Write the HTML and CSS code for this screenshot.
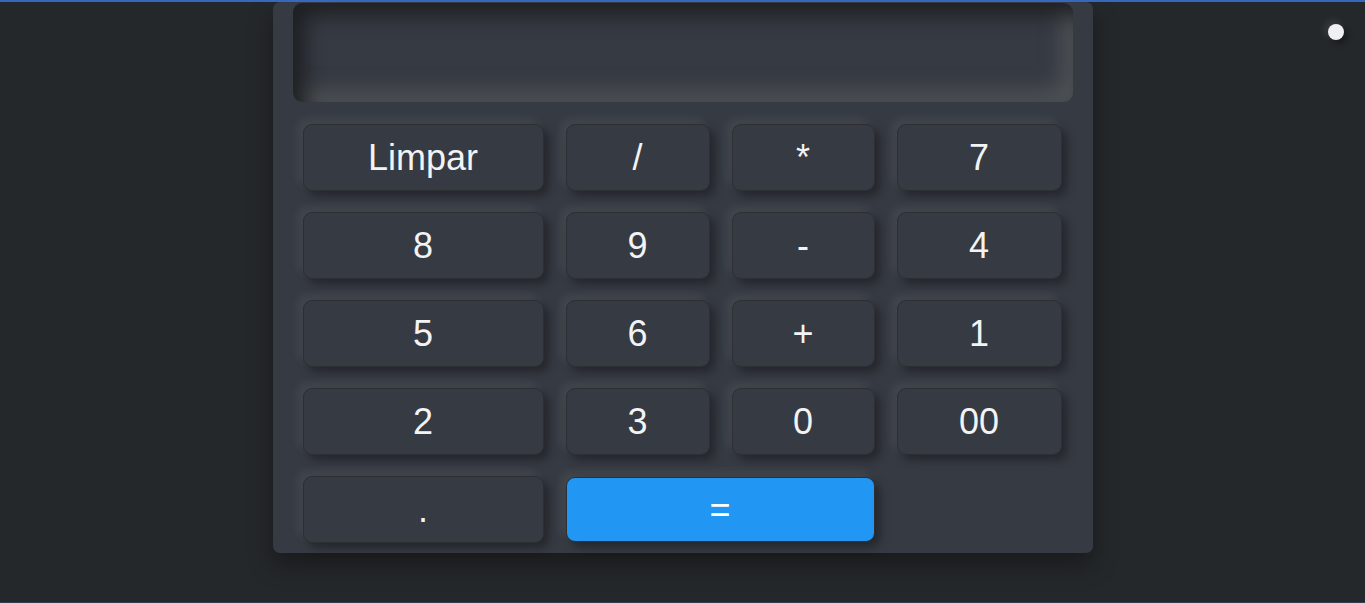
FILE: index.html
```html
<!DOCTYPE html>
<html lang="pt">
<head>
<meta charset="utf-8">
<title>Calculadora</title>
<link rel="stylesheet" href="styles.css">
</head>
<body>
<div class="toggle"></div>
<main class="calc">
  <div class="display"></div>
  <div class="keys">
    <button class="key">Limpar</button>
    <button class="key">/</button>
    <button class="key">*</button>
    <button class="key">7</button>
    <button class="key">8</button>
    <button class="key">9</button>
    <button class="key">-</button>
    <button class="key">4</button>
    <button class="key">5</button>
    <button class="key">6</button>
    <button class="key">+</button>
    <button class="key">1</button>
    <button class="key">2</button>
    <button class="key">3</button>
    <button class="key">0</button>
    <button class="key">00</button>
    <button class="key">.</button>
    <button class="key key-equals">=</button>
  </div>
</main>
</body>
</html>
```

FILE: styles.css
```css
* { box-sizing: border-box; }
html, body { margin: 0; padding: 0; }
body {
  height: 603px;
  background: #25282b;
  border-top: 2px solid #3768bf;
  border-bottom: 1px solid #3a3a55;
  font-family: "Liberation Sans", Arial, sans-serif;
  overflow: hidden;
  position: relative;
}
.toggle {
  position: absolute;
  top: 22px;
  left: 1328px;
  width: 16px;
  height: 16px;
  border-radius: 50%;
  background: #eef0f4;
  box-shadow: -3px -3px 8px rgba(255,255,255,0.12), 3px 3px 6px rgba(0,0,0,0.45);
}
.calc {
  width: 820px;
  margin: 0 auto;
  background: #363a42;
  border-radius: 7px;
  padding: 1px 20px 10px;
  box-shadow: 0 12px 24px rgba(0,0,0,0.35);
}
.display {
  height: 99px;
  border-radius: 9px;
  background: #363a42;
  box-shadow: inset 12px 12px 20px #1e2023, inset -12px -12px 20px #4f5357;
  margin-bottom: 22px;
}
.keys {
  display: grid;
  grid-template-columns: 241px 144px 143px 165px;
  grid-auto-rows: 67px;
  column-gap: 22px;
  row-gap: 21px;
  padding: 0 11px 0 10px;
}
.key {
  font-family: "Liberation Sans", Arial, sans-serif;
  font-size: 36px;
  color: #f2f3f5;
  background: #363a42;
  border: 1px solid #2e2f32;
  border-radius: 9px;
  box-shadow: 5px 5px 10px rgba(0,0,0,0.35), -5px -5px 10px rgba(255,255,255,0.07);
  display: flex;
  align-items: center;
  justify-content: center;
  padding: 0;
  cursor: pointer;
}
.key-equals {
  grid-column: 2 / 4;
  background: #2196f3;
  margin: 1px 0 1px 0;
  color: #ffffff;
}
```
